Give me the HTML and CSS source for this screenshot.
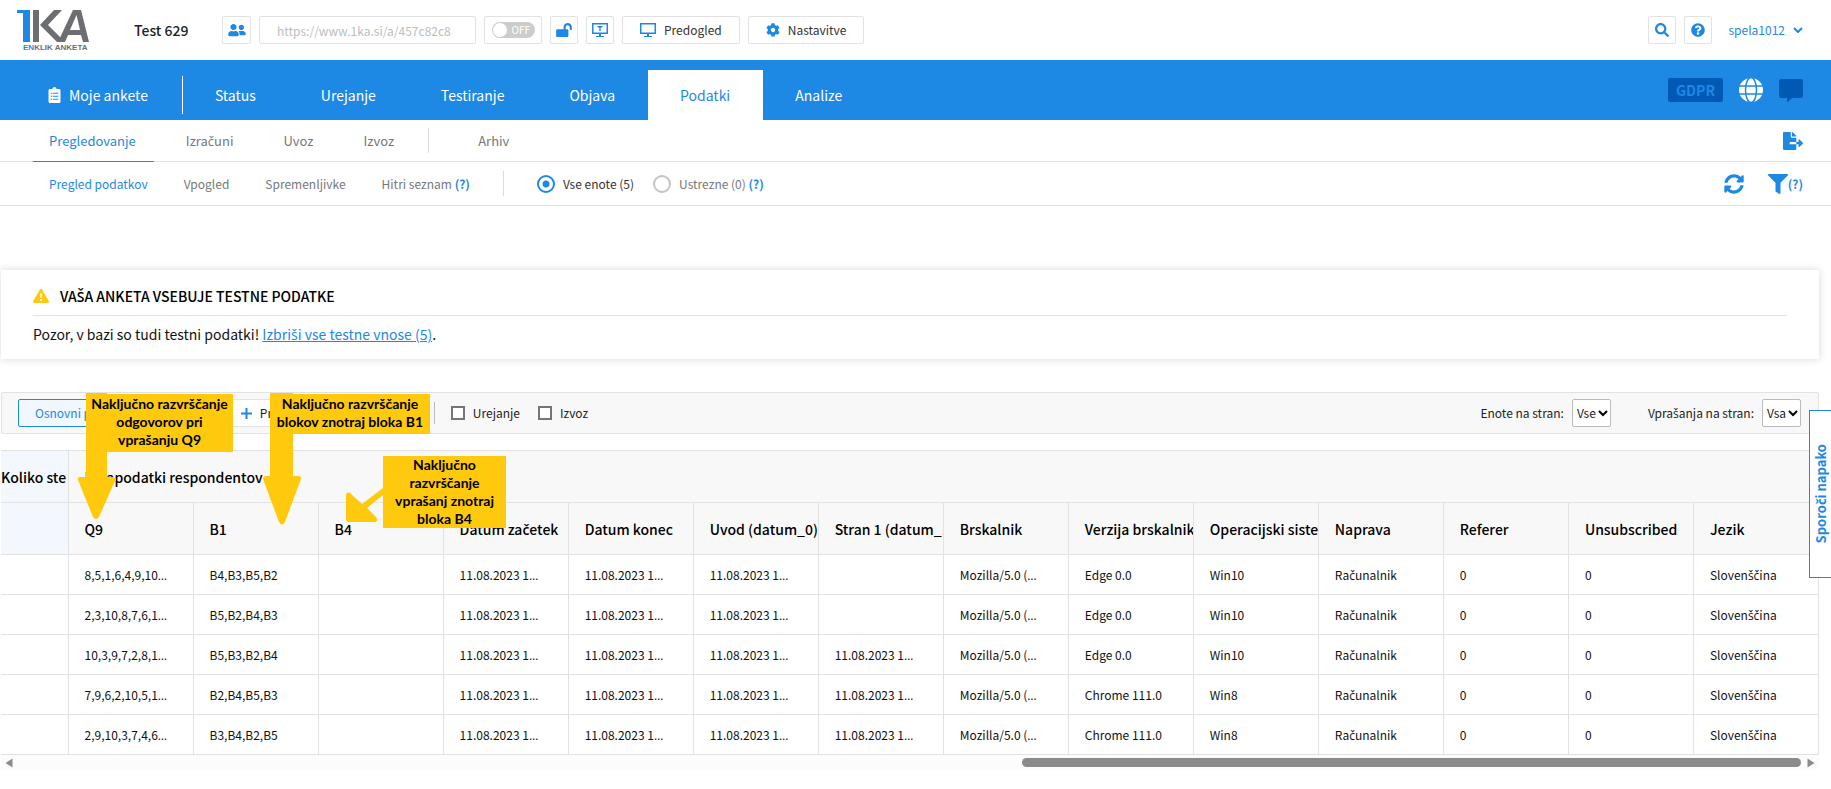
FILE: index.html
```html
<!DOCTYPE html>
<html lang="sl">
<head>
<meta charset="utf-8">
<title>1KA – Test 629</title>
<link rel="stylesheet" href="styles.css">
</head>
<body>
<header class="top">
  <a class="logo" href="#" aria-label="1KA EnKlik Anketa">
    <svg width="78" height="44" viewBox="0 0 78 44">
      <path fill="#1e88e5" d="M1 2h13v32H7V5H1z"/>
      <path fill="#6d6e71" d="M17 2h6v32h-6zM24 17 38 2h8L32 17l17 17h-8z"/>
      <path fill="#6d6e71" d="M42 34 57 2h8l8 32h-6l-2-7H52l-3 7zM54 22h10L60.500 7z" fill-rule="evenodd"/>
      <text x="7" y="42" class="logo-text"><tspan fill="#1e88e5">EN</tspan><tspan fill="#6d6e71">KLIK ANKETA</tspan></text>
    </svg>
  </a>
  <h1 class="title">Test 629</h1>
  <div class="tools">
    <button class="box users" aria-label="Uredniki"><svg class="i18" viewBox="0 0 640 512"><path d="M192 256c61.900 0 112-50.100 112-112S253.900 32 192 32 80 82.100 80 144s50.100 112 112 112zm76.800 32h-8.300c-20.800 10-43.900 16-68.500 16s-47.600-6-68.500-16h-8.300C51.600 288 0 339.600 0 403.200V432c0 26.500 21.500 48 48 48h288c26.500 0 48-21.500 48-48v-28.800c0-63.600-51.600-115.200-115.200-115.200zM480 256c53 0 96-43 96-96s-43-96-96-96-96 43-96 96 43 96 96 96zm48 32h-3.800c-13.900 4.800-28.600 8-44.200 8s-30.300-3.200-44.200-8H432c-20.400 0-39.200 5.900-55.700 15.400 24.400 26.300 39.700 61.200 39.700 99.800v38.400c0 2.200-.5 4.300-.6 6.400H592c26.500 0 48-21.500 48-48 0-61.900-50.100-112-112-112z"/></svg></button>
    <input class="box url" type="text" placeholder="https://www.1ka.si/a/457c82c8" aria-label="Povezava">
    <button class="box toggle" aria-label="Aktivnost"><span class="switch"><span class="knob"></span>OFF</span></button>
    <button class="box square" aria-label="Zaklepanje"><svg class="i16" viewBox="0 0 576 512"><path d="M423.500 0C339.500.3 272 69.500 272 153.500V224H48c-26.500 0-48 21.500-48 48v192c0 26.500 21.500 48 48 48h352c26.500 0 48-21.500 48-48V272c0-26.500-21.500-48-48-48h-48v-71.100c0-39.600 31.700-72.500 71.300-72.900 40-.4 72.700 32.100 72.700 72v80c0 13.300 10.700 24 24 24h32c13.300 0 24-10.700 24-24v-80C576 68 507.500-.3 423.500 0z"/></svg></button>
    <button class="box square" aria-label="Test"><svg class="i16" viewBox="0 0 16 14"><path d="M0 0h16v11H9v2h3v1H4v-1h3v-2H0zM1.500 1.500v8h13v-8z" fill-rule="evenodd"/><path d="M5.500 3h5v1.500H8.700V8H7.300V4.500H5.500z"/></svg></button>
    <button class="box wide"><svg class="i16" viewBox="0 0 16 14"><path d="M0 0h16v11H9v2h3v1H4v-1h3v-2H0zM1.500 1.500v8h13v-8z" fill-rule="evenodd"/></svg>Predogled</button>
    <button class="box wide"><svg class="i14" viewBox="0 0 512 512"><path d="M487.400 315.700l-42.600-24.600c4.300-23.200 4.300-47 0-70.200l42.600-24.600c4.900-2.800 7.100-8.600 5.500-14-11.100-35.600-30-67.800-54.700-94.600-3.800-4.100-10-5.100-14.800-2.300L380.800 110c-17.900-15.400-38.500-27.300-60.800-35.100V25.800c0-5.600-3.900-10.500-9.400-11.700-36.700-8.200-74.300-7.800-109.200 0-5.500 1.200-9.400 6.100-9.400 11.700V75c-22.200 7.900-42.800 19.800-60.800 35.100L88.700 85.500c-4.900-2.800-11-1.900-14.800 2.300-24.700 26.700-43.600 58.900-54.700 94.600-1.700 5.400.6 11.200 5.500 14L67.300 221c-4.300 23.200-4.300 47 0 70.200l-42.600 24.600c-4.900 2.800-7.100 8.600-5.500 14 11.100 35.600 30 67.800 54.700 94.600 3.800 4.100 10 5.100 14.800 2.300l42.600-24.600c17.900 15.400 38.500 27.300 60.800 35.100v49.200c0 5.600 3.900 10.500 9.400 11.700 36.700 8.200 74.300 7.800 109.200 0 5.500-1.200 9.400-6.100 9.400-11.700v-49.200c22.200-7.900 42.800-19.800 60.800-35.100l42.600 24.600c4.900 2.800 11 1.900 14.800-2.300 24.700-26.700 43.600-58.900 54.700-94.600 1.500-5.500-.7-11.300-5.600-14.100zM256 336c-44.100 0-80-35.900-80-80s35.900-80 80-80 80 35.900 80 80-35.900 80-80 80z"/></svg>Nastavitve</button>
  </div>
  <div class="account">
    <button class="box square" aria-label="Iskanje"><svg class="i14" viewBox="0 0 512 512"><path d="M505 442.700L405.300 343c-4.500-4.500-10.600-7-17-7H372c27.600-35.300 44-79.700 44-128C416 93.100 322.900 0 208 0S0 93.100 0 208s93.100 208 208 208c48.300 0 92.700-16.400 128-44v16.300c0 6.400 2.500 12.500 7 17l99.700 99.700c9.400 9.400 24.600 9.400 33.900 0l28.300-28.300c9.400-9.400 9.400-24.600.1-34zM208 336c-70.700 0-128-57.200-128-128 0-70.700 57.200-128 128-128 70.700 0 128 57.200 128 128 0 70.700-57.200 128-128 128z"/></svg></button>
    <button class="box square" aria-label="Pomoč"><svg class="i14" viewBox="0 0 512 512"><path d="M504 256c0 137-111 248-248 248S8 393 8 256C8 119.100 119 8 256 8s248 111.100 248 248zM262.700 90c-54.500 0-89.300 23-116.500 63.800-3.500 5.300-2.400 12.400 2.700 16.300l34.700 26.300c5.200 3.900 12.600 3 16.700-2.100 17.900-22.700 30.100-35.800 57.300-35.800 20.400 0 45.700 13.100 45.700 33 0 15-12.400 22.700-32.500 34C247.100 238.500 216 254.900 216 296v4c0 6.600 5.400 12 12 12h56c6.600 0 12-5.400 12-12v-1.300c0-28.500 83.200-29.600 83.200-106.700 0-58-60.200-102-116.500-102zM256 338c-25.400 0-46 20.600-46 46s20.600 46 46 46 46-20.600 46-46-20.600-46-46-46z"/></svg></button>
    <a class="user" href="#">spela1012 <svg class="chev" viewBox="0 0 10 6"><path d="M1 1l4 4 4-4"/></svg></a>
  </div>
</header>

<nav class="main-nav">
  <a class="tab surveys" href="#"><svg class="clip" viewBox="0 0 384 512"><path d="M336 64h-80c0-35.300-28.700-64-64-64s-64 28.700-64 64H48C21.500 64 0 85.500 0 112v352c0 26.500 21.500 48 48 48h288c26.500 0 48-21.500 48-48V112c0-26.500-21.500-48-48-48zM72 180h40v36H72zm64 0h180v36H136zM72 276h40v36H72zm64 0h180v36H136zM72 372h40v36H72zm64 0h180v36H136z" fill-rule="evenodd"/></svg>Moje ankete</a>
  <span class="nav-rule"></span>
  <a class="tab" href="#">Status</a>
  <a class="tab" href="#">Urejanje</a>
  <a class="tab" href="#">Testiranje</a>
  <a class="tab" href="#">Objava</a>
  <a class="tab active" href="#">Podatki</a>
  <a class="tab" href="#">Analize</a>
  <div class="nav-right">
    <a class="gdpr" href="#">GDPR</a>
    <svg class="i24" viewBox="0 0 24 24"><circle cx="12" cy="12" r="12" fill="#fff"/><g fill="none" stroke="#1e88e5" stroke-width="1.500"><ellipse cx="12" cy="12" rx="5.500" ry="12.500"/><path d="M0 8h24M0 16h24"/></g></svg>
    <svg class="i24 chat" viewBox="0 0 24 24"><path d="M2 1h20a2 2 0 0 1 2 2v15a2 2 0 0 1-2 2h-9l-5 5v-5H2a2 2 0 0 1-2-2V3a2 2 0 0 1 2-2z"/></svg>
  </div>
</nav>

<nav class="sub-nav">
  <a class="active" href="#">Pregledovanje</a>
  <a href="#">Izra<span class="ext">č</span>uni</a>
  <a href="#">Uvoz</a>
  <a href="#">Izvoz</a>
  <span class="rule"></span>
  <a href="#">Arhiv</a>
  <button class="plain push" aria-label="Izvozi"><svg width="20" height="18" viewBox="0 0 576 512"><path d="M384 121.900c0-6.300-2.500-12.400-7-16.900L279.100 7c-4.500-4.500-10.600-7-17-7H256v128h128zM571 308l-95.700-96.400c-10.100-10.100-27.400-3-27.400 11.300V288h-64v64h64v65.200c0 14.300 17.300 21.400 27.400 11.300L571 332c6.600-6.600 6.600-17.400 0-24zm-379 28v-32c0-8.800 7.200-16 16-16h176V160H248c-13.200 0-24-10.800-24-24V0H24C10.700 0 0 10.700 0 24v464c0 13.300 10.700 24 24 24h336c13.300 0 24-10.700 24-24V352H208c-8.800 0-16-7.200-16-16z"/></svg></button>
</nav>

<div class="view-nav">
  <nav class="views">
    <a class="active" href="#">Pregled podatkov</a>
    <a href="#">Vpogled</a>
    <a href="#">Spremenljivke</a>
    <a href="#">Hitri seznam <b>(?)</b></a>
  </nav>
  <span class="rule"></span>
  <div class="radios">
    <label class="on"><input type="radio" name="units" checked>Vse enote (5)</label>
    <label><input type="radio" name="units"><span>Ustrezne (0) <b>(?)</b></span></label>
  </div>
  <div class="actions">
    <button class="plain" aria-label="Osveži"><svg width="20" height="20" viewBox="0 0 512 512"><path d="M370.700 133.300C339.500 104 298.900 88 255.800 88c-77.500.1-144.300 53.200-162.800 126.900-1.300 5.400-6.100 9.200-11.700 9.200H24.100c-7.500 0-13.200-6.800-11.800-14.200C33.900 94.900 134.800 8 256 8c66.400 0 126.800 26.100 171.300 68.700L463 41C478.100 25.900 504 36.600 504 57.900V192c0 13.300-10.700 24-24 24H345.900c-21.400 0-32.100-25.900-17-41l41.800-41.700zM32 296h134.100c21.400 0 32.100 25.900 17 41l-41.800 41.800c31.300 29.300 71.800 45.300 114.900 45.300 77.400-.1 144.300-53.100 162.800-126.800 1.300-5.400 6.100-9.200 11.700-9.200h57.300c7.500 0 13.200 6.800 11.800 14.200C478.100 417.100 377.200 504 256 504c-66.400 0-126.800-26.100-171.300-68.700L49 471C33.900 486.100 8 475.400 8 454.100V320c0-13.300 10.700-24 24-24z"/></svg></button>
    <button class="plain filter"><svg width="20" height="20" viewBox="0 0 512 512"><path d="M488 0H24C2.700 0-8 25.900 7.100 41L192 225.900V432c0 7.800 3.800 15.200 10.200 19.700l80 56C298 518.700 320 507.500 320 488V225.900L504.900 41C520 25.900 509.300 0 488 0z"/></svg><b>(?)</b></button>
  </div>
</div>

<main>
  <section class="alert">
    <h2><svg width="16" height="14" viewBox="0 0 16 14"><path fill="#ffc90e" d="M8 0c.6 0 1 .3 1.300.7l6.500 11.200c.5 1-.1 2.100-1.300 2.100h-13C.3 14-.3 12.900.2 11.900L6.700.7C7 .3 7.400 0 8 0z"/><path fill="#fff" d="M7 4.500h2L8.700 9H7.300zM7 10h2v2H7z"/></svg><span>VA<span class="ext">Š</span>A ANKETA VSEBUJE TESTNE PODATKE</span></h2>
    <p>Pozor, v bazi so tudi testni podatki! <a href="#">Izbri<span class="ext">š</span>i vse testne vnose (5)</a>.</p>
  </section>

  <div class="workspace">
    <div class="toolbar">
      <button class="mode selected">Osnovni podatki</button>
      <button class="mode more"><svg width="11" height="11" viewBox="0 0 11 11"><path d="M4.500 0h2v4.500H11v2H6.500V11h-2V6.500H0v-2h4.500z"/></svg>Prikaži vse podatke</button>
      <span class="bar"></span>
      <label class="check"><input type="checkbox">Urejanje</label>
      <label class="check"><input type="checkbox">Izvoz</label>
      <label class="pick first">Enote na stran: <select><option>Vse</option></select></label>
      <label class="pick"><span>Vpra<span class="ext">š</span>anja na stran:</span> <select><option>Vsa</option></select></label>
    </div>

    <div class="grid">
      <table>
        <colgroup><col class="lead"><col span="14"></colgroup>
        <thead>
          <tr><th class="tint">Koliko ste</th><th colspan="14">Parapodatki respondentov</th></tr>
          <tr><th class="tint"></th><th>Q9</th><th>B1</th><th>B4</th><th>Datum za<span class="ext">č</span>etek</th><th>Datum konec</th><th>Uvod (datum_0)</th><th>Stran 1 (datum_1)</th><th>Brskalnik</th><th>Verzija brskalnika</th><th>Operacijski sistem</th><th>Naprava</th><th>Referer</th><th>Unsubscribed</th><th>Jezik</th></tr>
        </thead>
        <tbody>
          <tr><td></td><td>8,5,1,6,4,9,10<span class="ext">…</span></td><td>B4,B3,B5,B2</td><td></td><td>11.08.2023 1<span class="ext">…</span></td><td>11.08.2023 1<span class="ext">…</span></td><td>11.08.2023 1<span class="ext">…</span></td><td></td><td>Mozilla/5.0 (<span class="ext">…</span></td><td>Edge 0.0</td><td>Win10</td><td>Ra<span class="ext">č</span>unalnik</td><td>0</td><td>0</td><td>Sloven<span class="ext">šč</span>ina</td></tr>
          <tr><td></td><td>2,3,10,8,7,6,1<span class="ext">…</span></td><td>B5,B2,B4,B3</td><td></td><td>11.08.2023 1<span class="ext">…</span></td><td>11.08.2023 1<span class="ext">…</span></td><td>11.08.2023 1<span class="ext">…</span></td><td></td><td>Mozilla/5.0 (<span class="ext">…</span></td><td>Edge 0.0</td><td>Win10</td><td>Ra<span class="ext">č</span>unalnik</td><td>0</td><td>0</td><td>Sloven<span class="ext">šč</span>ina</td></tr>
          <tr><td></td><td>10,3,9,7,2,8,1<span class="ext">…</span></td><td>B5,B3,B2,B4</td><td></td><td>11.08.2023 1<span class="ext">…</span></td><td>11.08.2023 1<span class="ext">…</span></td><td>11.08.2023 1<span class="ext">…</span></td><td>11.08.2023 1<span class="ext">…</span></td><td>Mozilla/5.0 (<span class="ext">…</span></td><td>Edge 0.0</td><td>Win10</td><td>Ra<span class="ext">č</span>unalnik</td><td>0</td><td>0</td><td>Sloven<span class="ext">šč</span>ina</td></tr>
          <tr><td></td><td>7,9,6,2,10,5,1<span class="ext">…</span></td><td>B2,B4,B5,B3</td><td></td><td>11.08.2023 1<span class="ext">…</span></td><td>11.08.2023 1<span class="ext">…</span></td><td>11.08.2023 1<span class="ext">…</span></td><td>11.08.2023 1<span class="ext">…</span></td><td>Mozilla/5.0 (<span class="ext">…</span></td><td>Chrome 111.0</td><td>Win8</td><td>Ra<span class="ext">č</span>unalnik</td><td>0</td><td>0</td><td>Sloven<span class="ext">šč</span>ina</td></tr>
          <tr><td></td><td>2,9,10,3,7,4,6<span class="ext">…</span></td><td>B3,B4,B2,B5</td><td></td><td>11.08.2023 1<span class="ext">…</span></td><td>11.08.2023 1<span class="ext">…</span></td><td>11.08.2023 1<span class="ext">…</span></td><td>11.08.2023 1<span class="ext">…</span></td><td>Mozilla/5.0 (<span class="ext">…</span></td><td>Chrome 111.0</td><td>Win8</td><td>Ra<span class="ext">č</span>unalnik</td><td>0</td><td>0</td><td>Sloven<span class="ext">šč</span>ina</td></tr>
        </tbody>
      </table>
      <div class="scroll">
        <svg width="8" height="10" viewBox="0 0 8 10"><path d="M7.500.5v9L.5 5z"/></svg>
        <div class="track"><div class="thumb" style="width: 43.7%"></div></div>
        <svg width="8" height="10" viewBox="0 0 8 10"><path d="M.5.5v9l7-4.500z"/></svg>
      </div>
    </div>

    <svg class="arrows" width="520" height="140" viewBox="0 0 520 140">
      <path d="M85 1h21v84h6q3 1 2 4L98 125q-3 4-6 0L77 88q-1-3 2-3h6z"/>
      <path d="M269 1h23v83h6q3 1 2 3L284 130q-3 5-6 0L262 87q0-3 3-3h4z"/>
      <path d="M345 103q1-4 4-2l12 11 21-16v7l-16 13 9 9q3 4-1 5h-26q-3 0-3-3z"/>
    </svg>
    <div class="note note-q9">Naključno razvrščanje<br>odgovorov pri<br>vprašanju Q9</div>
    <div class="note note-b1">Naključno razvrščanje<br>blokov znotraj bloka B1</div>
    <div class="note note-b4">Naključno<br>razvrščanje<br>vprašanj znotraj<br>bloka B4</div>
  </div>
</main>
<button class="report">Sporo<span class="ext">č</span>i napako</button>
</body>
</html>
```

FILE: styles.css
```css
* { box-sizing: border-box; }

body {
  margin: 0;
  background: #fff;
  color: #111;
  font-family: "Noto Sans CJK SC", "Open Sans", sans-serif;
  font-size: 12px;
  line-height: 20px;
}

.ext { font-family: "Open Sans", "Noto Sans", sans-serif; line-height: 1; }
th .ext, h2 .ext { font-weight: 600; }

a { color: inherit; text-decoration: none; }
button, input, select { font: inherit; color: inherit; }
button { cursor: pointer; }
svg { display: block; flex: none; fill: #1e88e5; }
b { color: #1e88e5; font-weight: 700; }

.i14 { width: 14px; height: 14px; }
.i16 { width: 16px; height: 14px; }
.i18 { width: 18px; height: 14px; }
.i24 { width: 24px; height: 24px; }

/* Header */
.top {
  display: flex;
  align-items: center;
  height: 60px;
  padding: 0 28px 0 16px;
}
.logo-text { font: 700 8px "Liberation Sans", sans-serif; }
.title { width: 88px; margin: 0 0 0 40px; font-size: 14px; font-weight: 500; color: #222; white-space: nowrap; }
.tools { display: flex; gap: 8px; }
.account { display: flex; align-items: center; gap: 8px; margin-left: auto; }
.box {
  display: flex;
  align-items: center;
  justify-content: center;
  height: 28px;
  padding: 0;
  background: #fff;
  border: 1px solid #e2e2e2;
  border-radius: 2px;
}
.square { width: 28px; }
.users { width: 29px; }
.url { width: 217px; padding: 0 8px 0 17px; font-size: 12px; }
.url::placeholder { color: #bdbdbd; opacity: 1; }
.toggle { width: 58px; }
.switch {
  display: flex;
  align-items: center;
  gap: 5px;
  width: 43px;
  height: 16px;
  padding: 0 1px;
  border-radius: 8px;
  background: #ccc;
  color: #fff;
  font-size: 10px;
}
.knob { width: 14px; height: 14px; border-radius: 50%; background: #fff; }
.wide { gap: 8px; padding: 0 17px; color: #333; }
.user { display: flex; align-items: center; gap: 8px; margin-left: 8px; color: #1e88e5; }
.chev { width: 10px; height: 6px; fill: none; stroke: #1e88e5; stroke-width: 2; }

/* Main navigation */
.main-nav {
  display: flex;
  align-items: flex-end;
  height: 60px;
  padding: 0 28px 0 16px;
  background: #1e88e5;
  color: #fff;
  font-size: 14px;
}
.tab { display: flex; align-items: center; height: 50px; padding: 0 33px 0 32px; }
.surveys { gap: 8px; padding-right: 34px; }
.clip { width: 13px; height: 16px; fill: #fff; }
.nav-rule { width: 1px; height: 38px; margin-bottom: 6px; background: #fff; }
.main-nav .active { background: #fff; color: #1e88e5; }
.nav-right { display: flex; align-items: center; gap: 16px; height: 60px; margin-left: auto; }
.gdpr { padding: 2px 8px; border-radius: 2px; background: #0059b2; color: #1e88e5; font-weight: 700; }
.chat { fill: #0059b2; }

/* Second and third level navigation */
.sub-nav {
  display: flex;
  align-items: center;
  height: 42px;
  padding: 0 28px 0 33px;
  border-bottom: 1px solid #e2e2e2;
  color: #777;
  font-size: 13px;
}
.sub-nav a { height: 42px; padding: 11px 18px 0 16px; margin-right: 16px; }
.sub-nav .active { border-bottom: 1px solid #1e88e5; color: #1e88e5; }
.rule { width: 1px; height: 25px; background: #ddd; }
.sub-nav .rule { margin-right: 33px; }
.plain { display: flex; align-items: center; padding: 0; border: 0; background: none; }
.push { margin-left: auto; }
.view-nav {
  display: flex;
  align-items: center;
  height: 44px;
  padding: 0 28px 0 49px;
  border-bottom: 1px solid #e2e2e2;
  color: #777;
}
.views { display: flex; gap: 36px; margin-right: 33px; }
.view-nav .active { color: #1e88e5; }
.radios { display: flex; gap: 19px; margin-left: 33px; }
.radios label { display: flex; align-items: center; gap: 8px; }
.radios .on { color: #333; }
.radios input {
  appearance: none;
  width: 18px;
  height: 18px;
  margin: 0;
  border: 2px solid #c4c4c4;
  border-radius: 50%;
}
.radios input:checked { border-color: #1e88e5; background: radial-gradient(circle, #1e88e5 3px, #fff 4px); }
.actions { display: flex; gap: 24px; margin-left: auto; }

/* Warning */
.alert {
  margin: 64px 12px 0 1px;
  padding: 16px 32px 15px;
  background: #fff;
  box-shadow: 0 0 8px rgba(0, 0, 0, .16);
}
.alert h2 {
  display: flex;
  align-items: center;
  gap: 11px;
  margin: 0 0 8px;
  padding-bottom: 9px;
  border-bottom: 1px solid #e2e2e2;
  font-size: 14px;
  font-weight: 500;
  color: #000;
}
.alert p { margin: 0; font-size: 14px; }
.alert a { color: #1e88e5; text-decoration: underline; }

/* Toolbar */
.workspace { position: relative; margin: 33px 12px 0 1px; }
.toolbar {
  display: flex;
  align-items: center;
  height: 42px;
  padding: 0 17px 0 16px;
  border: 1px solid #e2e2e2;
  border-radius: 2px;
  background: #f8f8f8;
  color: #222;
}
.mode {
  height: 28px;
  padding: 0 16px;
  border: 1px solid #e2e2e2;
  border-radius: 2px;
  background: #fff;
  white-space: nowrap;
}
.selected { border-color: #1e88e5; background: #f0f7ff; color: #1e88e5; }
.more { display: flex; align-items: center; gap: 8px; width: 196px; margin-left: 80px; overflow: hidden; }
.bar { width: 1px; height: 22px; margin: 0 16px 0 14px; background: #bbb; }
.check { display: flex; align-items: center; gap: 8px; margin-right: 18px; }
.check input {
  appearance: none;
  width: 14px;
  height: 14px;
  margin: 0;
  border: 2px solid #757575;
  background: #fff;
}
.pick { display: flex; align-items: center; gap: 8px; margin-left: 37px; }
.pick.first { margin-left: auto; }
.pick select {
  appearance: none;
  width: 39px;
  height: 28px;
  padding: 0 0 0 4px;
  border: 1px solid #bbb;
  border-radius: 2px;
  background: #fff url("data:image/svg+xml,%3Csvg xmlns='http://www.w3.org/2000/svg' width='10' height='7'%3E%3Cpath d='M1 1l4 4 4-4' fill='none' stroke='%23000' stroke-width='2'/%3E%3C/svg%3E") no-repeat right 2px center;
}

/* Data table */
.grid { margin-top: 16px; }
table { width: 100%; table-layout: fixed; border-collapse: collapse; }
.lead { width: 67px; }
th, td {
  height: 40px;
  padding: 0 0 0 16px;
  border: 1px solid #e2e2e2;
  overflow: hidden;
  text-align: left;
  white-space: nowrap;
}
th { height: 52px; background: #f8f8f8; font-size: 14px; font-weight: 500; color: #000; }
th:first-child, td:first-child { border-left: 0; padding: 0; }
.tint { background: #f2f8fe; }
.scroll { display: flex; align-items: center; gap: 6px; height: 15px; padding: 0 4px; background: #fcfcfc; }
.scroll svg { fill: #8b8b8b; }
.track { flex: 1; }
.thumb { height: 9px; margin-left: auto; border-radius: 5px; background: #8b8b8b; }

/* Notes lying over the data */
.arrows { position: absolute; left: 0; top: 0; }
.arrows path { fill: #ffc90e; }
.note {
  position: absolute;
  background: #ffc90e;
  color: #000;
  font: 700 14px/18px Lato, sans-serif;
  text-align: center;
  white-space: nowrap;
}
.note-q9 { left: 85px; top: 2px; width: 147px; padding: 1px 0 3px; }
.note-b1 { left: 269px; top: 2px; width: 160px; padding: 1px 0 3px; }
.note-b4 { left: 382px; top: 64px; width: 123px; }

/* Side tab */
.report {
  position: fixed;
  right: 0;
  top: 410px;
  width: 22px;
  height: 168px;
  padding: 0;
  border: 1px solid #1e88e5;
  border-right: 0;
  background: #fff;
  color: #1e88e5;
  font-size: 13px;
  font-weight: 700;
  writing-mode: sideways-lr;
}
```
